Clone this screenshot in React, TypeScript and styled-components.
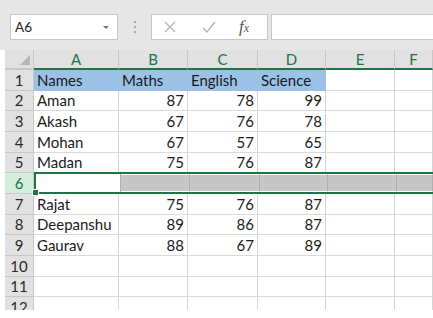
import React from "react";
import styled, { createGlobalStyle } from "styled-components";

const GlobalStyle = createGlobalStyle`
  html, body {
    margin: 0;
    padding: 0;
    background: #ffffff;
    font-family: Lato, "Liberation Sans", sans-serif;
  }
`;

const columns = ["A", "B", "C", "D", "E", "F"];

type Row = { name: string; maths: string; english: string; science: string };

const rows: (Row | null)[] = [
  { name: "Names", maths: "Maths", english: "English", science: "Science" },
  { name: "Aman", maths: "87", english: "78", science: "99" },
  { name: "Akash", maths: "67", english: "76", science: "78" },
  { name: "Mohan", maths: "67", english: "57", science: "65" },
  { name: "Madan", maths: "75", english: "76", science: "87" },
  null,
  { name: "Rajat", maths: "75", english: "76", science: "87" },
  { name: "Deepanshu", maths: "89", english: "86", science: "87" },
  { name: "Gaurav", maths: "88", english: "67", science: "89" },
  { name: "", maths: "", english: "", science: "" },
  { name: "", maths: "", english: "", science: "" },
  { name: "", maths: "", english: "", science: "" },
];

function App() {
  return (
    <Page>
      <GlobalStyle />
      <Toolbar>
        <NameBox>
          <span>A6</span>
          <Caret />
        </NameBox>
        <Dots>
          <i />
          <i />
          <i />
        </Dots>
        <FxBox>
          <svg width="14" height="14" viewBox="0 0 14 14">
            <path d="M2 2 L12 12 M12 2 L2 12" stroke="#b4b4b4" strokeWidth="1.3" fill="none" />
          </svg>
          <svg width="16" height="14" viewBox="0 0 16 14">
            <path d="M2 8 L6 12 L14 2" stroke="#b4b4b4" strokeWidth="1.5" fill="none" />
          </svg>
          <Fx>
            f<small>x</small>
          </Fx>
        </FxBox>
        <FormulaBar />
      </Toolbar>

      <Sheet>
        <Corner>
          <svg width="10" height="10" viewBox="0 0 10 10">
            <path d="M10 0 L10 10 L0 10 Z" fill="#b7b7b7" />
          </svg>
        </Corner>
        {columns.map((c) => (
          <ColHead key={c}>{c}</ColHead>
        ))}

        {rows.map((r, i) => {
          const n = i + 1;
          if (!r) {
            return (
              <React.Fragment key={n}>
                <RowHead $active>{n}</RowHead>
                <SelRow>
                  <SelCell $first />
                  <SelCell />
                  <SelCell />
                  <SelCell />
                  <SelCell />
                  <SelCell />
                  <FillHandle />
                </SelRow>
              </React.Fragment>
            );
          }
          const head = n === 1;
          return (
            <React.Fragment key={n}>
              <RowHead>{n}</RowHead>
              <Cell $head={head}>{r.name}</Cell>
              <Cell $head={head} $num={!head}>{r.maths}</Cell>
              <Cell $head={head} $num={!head}>{r.english}</Cell>
              <Cell $head={head} $num={!head}>{r.science}</Cell>
              <Cell />
              <Cell />
            </React.Fragment>
          );
        })}
      </Sheet>
    </Page>
  );
}

export default App;

const Page = styled.div`
  width: 433px;
  height: 318px;
  overflow: hidden;
  background: #fff;
`;

const Toolbar = styled.div`
  height: 50px;
  background: #e6e6e6;
  display: flex;
  align-items: flex-start;
  padding-top: 14px;
  box-sizing: border-box;
`;

const NameBox = styled.div`
  margin-left: 10px;
  width: 108px;
  height: 26px;
  box-sizing: border-box;
  background: #fff;
  border: 1px solid #c6c6c6;
  display: flex;
  align-items: center;
  justify-content: space-between;
  padding: 0 8px 0 4px;
  font-size: 13.5px;
  color: #1e1e1e;
`;

const Caret = styled.i`
  width: 0;
  height: 0;
  border-left: 3px solid transparent;
  border-right: 3px solid transparent;
  border-top: 3px solid #777;
`;

const Dots = styled.div`
  width: 33px;
  height: 26px;
  display: flex;
  flex-direction: column;
  align-items: center;
  justify-content: center;
  gap: 3px;
  i {
    width: 2px;
    height: 2px;
    background: #a8a8a8;
  }
`;

const FxBox = styled.div`
  width: 117px;
  height: 26px;
  box-sizing: border-box;
  background: #fff;
  border: 1px solid #c6c6c6;
  display: flex;
  align-items: center;
  gap: 24px;
  padding-left: 11px;
`;

const Fx = styled.span`
  font-family: "Liberation Serif", serif;
  font-style: italic;
  font-size: 17px;
  color: #555;
  margin-left: -2px;
  small {
    font-size: 12px;
  }
`;

const FormulaBar = styled.div`
  margin-left: 3px;
  flex: 1;
  height: 26px;
  box-sizing: border-box;
  background: #fff;
  border: 1px solid #c6c6c6;
  border-right: none;
`;

const Sheet = styled.div`
  margin-left: 5px;
  height: 260px;
  overflow: hidden;
  display: grid;
  grid-template-columns: 29px 85px 69px 70px 68px 69px 1fr;
  grid-template-rows: 20px repeat(12, 20.67px);
`;

const Corner = styled.div`
  background: #e1e1e1;
  border-right: 1px solid #c8c8c8;
  border-bottom: 2px solid #c8c8c8;
  box-sizing: border-box;
  display: flex;
  align-items: flex-end;
  justify-content: flex-end;
  padding: 0 3px 3px 0;
`;

const ColHead = styled.div`
  background: #e1e1e1;
  border-right: 1px solid #c8c8c8;
  border-bottom: 2px solid #217346;
  box-sizing: border-box;
  color: #217346;
  font-size: 15px;
  display: flex;
  align-items: center;
  justify-content: center;
`;

const RowHead = styled.div<{ $active?: boolean }>`
  background: ${(p) => (p.$active ? "#d3eedd" : "#e1e1e1")};
  color: ${(p) => (p.$active ? "#217346" : "#2a2a2a")};
  border-bottom: 1px solid #c8c8c8;
  border-right: 1px solid #c8c8c8;
  box-sizing: border-box;
  font-size: 15px;
  display: flex;
  align-items: center;
  justify-content: center;
`;

const Cell = styled.div<{ $head?: boolean; $num?: boolean }>`
  background: ${(p) => (p.$head ? "#9bc2e6" : "#fff")};
  border-bottom: 1px solid ${(p) => (p.$head ? "#9bc2e6" : "#dadada")};
  border-right: 1px solid ${(p) => (p.$head ? "#9bc2e6" : "#d4d4d4")};
  box-sizing: border-box;
  color: #1a1a1a;
  font-size: 15px;
  display: flex;
  align-items: center;
  justify-content: ${(p) => (p.$num ? "flex-end" : "flex-start")};
  padding: 0 3px;
  white-space: nowrap;
`;

const SelRow = styled.div`
  grid-column: 2 / -1;
  position: relative;
  display: grid;
  grid-template-columns: 85px 69px 70px 68px 69px 1fr;
  border-top: 2px solid #217346;
  border-bottom: 2px solid #217346;
  border-left: 2px solid #217346;
  margin-top: -1px;
  box-sizing: border-box;
`;

const SelCell = styled.div<{ $first?: boolean }>`
  background: ${(p) => (p.$first ? "#fff" : "#c6c6c6")};
  border-right: 1px solid #b0b0b0;
  border-top: ${(p) => (p.$first ? "none" : "1px solid #fff")};
  border-bottom: ${(p) => (p.$first ? "none" : "1px solid #fff")};
  box-sizing: border-box;
`;

const FillHandle = styled.i`
  position: absolute;
  left: -4px;
  bottom: -4px;
  width: 5px;
  height: 5px;
  background: #217346;
  border: 1px solid #fff;
`;
